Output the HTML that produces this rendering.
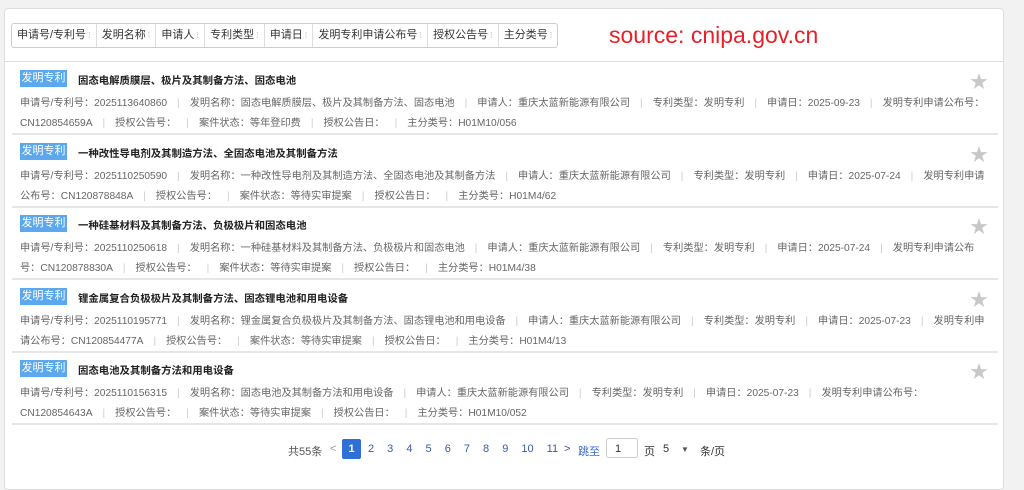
<!DOCTYPE html>
<html><head><meta charset="utf-8"><style>
body{margin:0;width:1024px;height:476px;background:#f2f2f2;font-family:"Liberation Sans","Noto Sans CJK SC",sans-serif;position:relative;overflow:hidden}
.card{position:absolute;left:4px;top:8px;width:998px;height:480px;background:#fff;border:1px solid #ddd;border-radius:4px}
.fb{position:absolute;left:11px;top:23px;height:23px;display:flex;border:1px solid #ccc;border-radius:3px;background:#fff}
.fb div{font-size:11px;color:#333;line-height:23px;padding:0 5px 0 5px;border-right:1px solid #ddd;white-space:nowrap}
.fb div:last-child{border-right:none}
.fb div:after{content:"\2009⁝";color:#bbb;font-size:9px}
.src{position:absolute;left:609px;top:22px;color:#e8202a;font-size:23px}
.hr{position:absolute;left:4px;width:999px;height:1px;background:#ddd}
.sep{position:absolute;left:12px;width:986px;height:2px;background:#e6e6e6}
.tag{position:absolute;left:20px;width:47px;height:17px;background:#5ba8ee;color:#fff;font-size:11px;line-height:17px;text-align:center}
.tt{position:absolute;left:78px;font-size:10.4px;font-weight:bold;color:#222;white-space:nowrap}
.m{position:absolute;left:20px;font-size:10.2px;color:#666;white-space:nowrap;word-spacing:0}
.m i{font-style:normal;color:#ccc;padding:0 10px}
.star{position:absolute;left:970px;color:#c8c8c8;font-size:18px}
.pg{position:absolute;top:443px;font-size:11px;color:#555;white-space:nowrap}
</style></head><body>
<div class="card"></div>
<div class="fb"><div>申请号/专利号</div><div>发明名称</div><div>申请人</div><div>专利类型</div><div>申请日</div><div>发明专利申请公布号</div><div>授权公告号</div><div>主分类号</div></div>
<div class="src">source: cnipa.gov.cn</div>
<div class="hr" style="top:61px"></div>

<div class="tag" style="top:70px">发明专利</div><div class="tt" style="top:72px">固态电解质膜层、极片及其制备方法、固态电池</div><div class="star" style="top:68px">★</div>
<div class="m" style="top:94px">申请号/专利号：2025113640860<i>|</i>发明名称：固态电解质膜层、极片及其制备方法、固态电池<i>|</i>申请人：重庆太蓝新能源有限公司<i>|</i>专利类型：发明专利<i>|</i>申请日：2025-09-23<i>|</i>发明专利申请公布号：</div>
<div class="m" style="top:114px">CN120854659A<i>|</i>授权公告号：<i>|</i>案件状态：等年登印费<i>|</i>授权公告日：<i>|</i>主分类号：H01M10/056</div>
<div class="sep" style="top:133px"></div>

<div class="tag" style="top:143px">发明专利</div><div class="tt" style="top:145px">一种改性导电剂及其制造方法、全固态电池及其制备方法</div><div class="star" style="top:141px">★</div>
<div class="m" style="top:167px">申请号/专利号：2025110250590<i>|</i>发明名称：一种改性导电剂及其制造方法、全固态电池及其制备方法<i>|</i>申请人：重庆太蓝新能源有限公司<i>|</i>专利类型：发明专利<i>|</i>申请日：2025-07-24<i>|</i>发明专利申请</div>
<div class="m" style="top:187px">公布号：CN120878848A<i>|</i>授权公告号：<i>|</i>案件状态：等待实审提案<i>|</i>授权公告日：<i>|</i>主分类号：H01M4/62</div>
<div class="sep" style="top:206px"></div>

<div class="tag" style="top:215px">发明专利</div><div class="tt" style="top:217px">一种硅基材料及其制备方法、负极极片和固态电池</div><div class="star" style="top:213px">★</div>
<div class="m" style="top:239px">申请号/专利号：2025110250618<i>|</i>发明名称：一种硅基材料及其制备方法、负极极片和固态电池<i>|</i>申请人：重庆太蓝新能源有限公司<i>|</i>专利类型：发明专利<i>|</i>申请日：2025-07-24<i>|</i>发明专利申请公布</div>
<div class="m" style="top:259px">号：CN120878830A<i>|</i>授权公告号：<i>|</i>案件状态：等待实审提案<i>|</i>授权公告日：<i>|</i>主分类号：H01M4/38</div>
<div class="sep" style="top:278px"></div>

<div class="tag" style="top:288px">发明专利</div><div class="tt" style="top:290px">锂金属复合负极极片及其制备方法、固态锂电池和用电设备</div><div class="star" style="top:286px">★</div>
<div class="m" style="top:312px">申请号/专利号：2025110195771<i>|</i>发明名称：锂金属复合负极极片及其制备方法、固态锂电池和用电设备<i>|</i>申请人：重庆太蓝新能源有限公司<i>|</i>专利类型：发明专利<i>|</i>申请日：2025-07-23<i>|</i>发明专利申</div>
<div class="m" style="top:332px">请公布号：CN120854477A<i>|</i>授权公告号：<i>|</i>案件状态：等待实审提案<i>|</i>授权公告日：<i>|</i>主分类号：H01M4/13</div>
<div class="sep" style="top:351px"></div>

<div class="tag" style="top:360px">发明专利</div><div class="tt" style="top:362px">固态电池及其制备方法和用电设备</div><div class="star" style="top:358px">★</div>
<div class="m" style="top:384px">申请号/专利号：2025110156315<i>|</i>发明名称：固态电池及其制备方法和用电设备<i>|</i>申请人：重庆太蓝新能源有限公司<i>|</i>专利类型：发明专利<i>|</i>申请日：2025-07-23<i>|</i>发明专利申请公布号：</div>
<div class="m" style="top:404px">CN120854643A<i>|</i>授权公告号：<i>|</i>案件状态：等待实审提案<i>|</i>授权公告日：<i>|</i>主分类号：H01M10/052</div>
<div class="sep" style="top:423px"></div>

<div class="pg" style="left:288px">共55条</div>
<div class="pg" style="left:330px;color:#999">&lt;</div>
<div style="position:absolute;left:342px;top:439px;width:19px;height:20px;background:#2f6fd6;border-radius:2px;color:#fff;font-size:11px;font-weight:bold;text-align:center;line-height:20px">1</div>
<div class="pg" style="left:368px;color:#3a5aa8;word-spacing:10px">2 3 4 5 6 7 8 9 10 11</div>
<div class="pg" style="left:564px;color:#3a5aa8">&gt;</div>
<div class="pg" style="left:578px;color:#3a6ad0">跳至</div>
<div style="position:absolute;left:606px;top:438px;height:20px;border:1px solid #ccc;border-radius:3px;font-size:11px;line-height:20px;padding-left:8px;box-sizing:border-box;color:#333;width:32px">1</div>
<div class="pg" style="left:644px;color:#333">页</div>
<div class="pg" style="left:663px;color:#333">5</div>
<div class="pg" style="left:681px;color:#555;font-size:8px;top:445px">▼</div>
<div class="pg" style="left:700px;color:#333">条/页</div>
</body></html>
